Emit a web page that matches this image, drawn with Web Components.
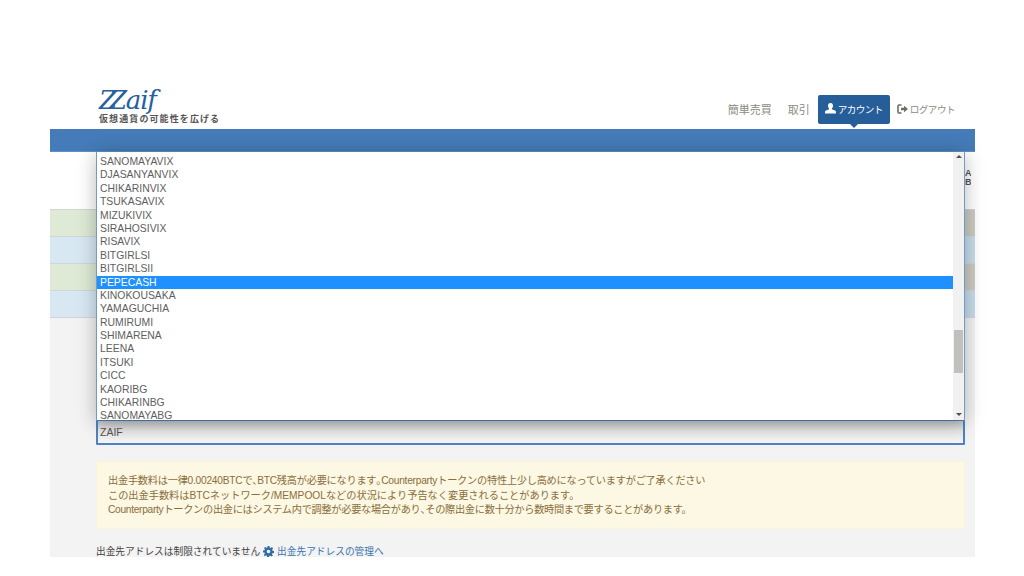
<!DOCTYPE html>
<html lang="ja">
<head>
<meta charset="utf-8">
<title>Zaif</title>
<style>
  html, body { margin: 0; background: #fff; }
  body { font-family: "Liberation Sans", "Noto Sans CJK JP", sans-serif; width: 1024px; height: 576px; overflow: hidden; }
  notice-box span { font-feature-settings: "halt"; }
</style>
</head>
<body>
<zaif-page>
  <zaif-header slot="header"></zaif-header>
  <balance-table slot="table"></balance-table>
  <coin-select slot="select"></coin-select>
  <notice-box slot="notice">
    <p style="letter-spacing:-.24px">出金手数料は一律0.00240BTCで<span>、</span>BTC残高が必要になります<span>。</span>Counterpartyトークンの特性上少し高めになっていますがご了承ください</p>
    <p>この出金手数料はBTCネットワーク/MEMPOOLなどの状況により予告なく変更されることがあります。</p>
    <p style="letter-spacing:-.29px">Counterpartyトークンの出金にはシステム内で調整が必要な場合があり<span>、</span>その際出金に数十分から数時間まで要することがあります。</p>
  </notice-box>
  <address-note slot="note"></address-note>
</zaif-page>

<script>
class ZaifPage extends HTMLElement {
  connectedCallback() {
    this.attachShadow({mode:'open'});
    this.shadowRoot.innerHTML = `
    <style>
      :host { display: block; padding: 87px 49px 0 50px; }
      .bar {
        height: 23px;
        background: #447bb8;
        border-bottom: 1px solid #5f8fc3;
        box-sizing: border-box;
      }
      main {
        position: relative;
        height: 405px;
        background: linear-gradient(#fff 0, #fff 57px, #f3f3f3 57px);
        display: flex;
        flex-direction: column;
      }
      .letters {
        position: absolute; left: 915px; top: 17px; width: 6px; overflow: hidden;
        font: bold 9px/9px "Liberation Sans", sans-serif; color: #555;
      }
      .table { margin-top: 57px; }
      .form { position: absolute; left: 46px; top: 268px; width: 869px; }
      .notice { margin-top: 16px; display: block; }
      .note { margin-top: 16px; display: block; }
    </style>
    <slot name="header"></slot>
    <div class="bar"></div>
    <main>
      <div class="letters">A<br>B</div>
      <div class="table"><slot name="table"></slot></div>
      <div class="form">
        <slot name="select"></slot>
        <div class="notice"><slot name="notice"></slot></div>
        <div class="note"><slot name="note"></slot></div>
      </div>
    </main>`;
  }
}

class ZaifHeader extends HTMLElement {
  connectedCallback() {
    this.attachShadow({mode:'open'});
    this.shadowRoot.innerHTML = `
    <style>
      :host { display: flex; justify-content: space-between; height: 42px; padding: 0 20px 0 49px; background: #fff; font-family: "Liberation Sans", "Noto Sans CJK JP", sans-serif; }
      .logo { display: flex; flex-direction: column; }
      .word { position: relative; height: 25px; padding-left: 10px; font: italic 26px/26px "DejaVu Serif", serif; color: #26609e; letter-spacing: -1.2px; }
      .word::before { content: "Z"; position: absolute; left: 0; top: 0; }
      .tag { font: 700 9px/11px "Noto Sans CJK JP", sans-serif; color: #555; letter-spacing: 1.1px; white-space: nowrap; margin-top: 1px; }
      nav { display: flex; align-items: flex-start; font-size: 9.6px; letter-spacing: -.55px; color: #8b8b80; padding-top: 8px; }
      a { display: flex; align-items: center; height: 27px; padding-bottom: 2px; white-space: nowrap; }
      .big { font-size: 11px; letter-spacing: 0; margin-right: 16px; }
      .big + .active { margin-left: -8px; }
      .active { position: relative; width: 72px; justify-content: center; box-sizing: content-box; background: #265e99; color: #fff; border-radius: 2px; margin-right: 7px; gap: 2px; }
      .active::after { content: ""; position: absolute; left: 32px; bottom: -4px; border: 4px solid transparent; border-bottom: 0; border-top-color: #265e99; }
      .out { gap: 2px; }
      svg { display: block; }
    </style>
    <div class="logo">
      <div class="word">Zaif</div>
      <div class="tag">仮想通貨の可能性を広げる</div>
    </div>
    <nav>
      <a class="big">簡単売買</a>
      <a class="big">取引</a>
      <a class="active">
        <svg width="11" height="11" viewBox="0 0 11 11"><path fill="#fff" d="M5.500 0C3.900 0 3 1.200 3 2.800c0 1.100.5 2.100 1.100 2.700v.8L.6 7.800C.2 8 0 8.400 0 8.900V10.500h11V8.900c0-.5-.2-.9-.6-1.100L6.900 6.300v-.8C7.500 4.900 8 3.900 8 2.800 8 1.200 7.100 0 5.500 0z"/></svg>
        アカウント
      </a>
      <a class="out">
        <svg width="11" height="10" viewBox="0 0 11 10"><path fill="none" stroke="#6e6e66" stroke-width="1.600" d="M4.500 1H2a1 1 0 0 0-1 1v6a1 1 0 0 0 1 1h2.500"/><path fill="#6e6e66" d="M4 3.800h3V1.800L11 5 7 8.200V6.200H4z"/></svg>
        ログアウト
      </a>
    </nav>`;
  }
}

class BalanceTable extends HTMLElement {
  connectedCallback() {
    this.attachShadow({mode:'open'});
    const rows = ['g','b','g','b'].map(c => `<div class="row ${c}"></div>`).join('');
    this.shadowRoot.innerHTML = `
    <style>
      :host { display: block; border-top: 1px solid #d4d4d0; }
      .row { height: 27px; box-sizing: border-box; border-bottom: 1px solid #cfd6da; }
      .g { background: linear-gradient(90deg, #deead6 0 890px, #cbcbc3 890px); }
      .b { background: linear-gradient(90deg, #d8e8f3 0 890px, #c7dceb 890px); }
    </style>${rows}`;
  }
}

class CoinSelect extends HTMLElement {
  connectedCallback() {
    this.attachShadow({mode:'open'});
    const coins = ['SANOMAYAVIX','DJASANYANVIX','CHIKARINVIX','TSUKASAVIX','MIZUKIVIX','SIRAHOSIVIX','RISAVIX','BITGIRLSI','BITGIRLSII','PEPECASH','KINOKOUSAKA','YAMAGUCHIA','RUMIRUMI','SHIMARENA','LEENA','ITSUKI','CICC','KAORIBG','CHIKARINBG','SANOMAYABG'];
    const items = coins.map(c => `<li class="${c === 'PEPECASH' ? 'sel' : ''}">${c}</li>`).join('');
    this.shadowRoot.innerHTML = `
    <style>
      :host { display: block; font-family: "Liberation Sans", "Noto Sans CJK JP", sans-serif; }
      .wrap { position: relative; }
      .field {
        height: 25px; box-sizing: border-box; padding-left: 2px;
        border: 2px solid #4a84c4; border-top-width: 1px; border-radius: 1px;
        background: linear-gradient(#c6c6c6, #e7e7e7 10px, #f6f6f6);
        font-size: 10.5px; line-height: 22px; color: #555;
      }
      .popup {
        position: absolute; left: 0; bottom: 100%; width: 100%; height: 268px; box-sizing: border-box;
        display: flex; background: #fff;
        border: 1px solid #6f9bcb; border-top: 0; border-bottom: 0;
        box-shadow: 0 3px 18px rgba(0,0,0,.28);
      }
      ul { flex: 1; margin: 0; padding: 3px 0 0; list-style: none; overflow: hidden; font-size: 10.4px; line-height: 13.4px; color: #5e5e5e; }
      li { padding-left: 3px; height: 13.4px; white-space: nowrap; }
      .sel { background: #1e90ff; color: #fff; }
      .scroll { position: relative; width: 11px; background: #f1f1f1; }
      .thumb { position: absolute; left: 1px; right: 1px; top: 178px; height: 43px; background: #c1c1bc; }
      .up, .down { position: absolute; left: 3px; border: 3px solid transparent; }
      .up { top: 3px; border-top: 0; border-bottom: 3px solid #505050; }
      .down { bottom: 4px; border-bottom: 0; border-top: 3px solid #505050; }
    </style>
    <div class="wrap">
      <div class="field">ZAIF</div>
      <div class="popup">
        <ul>${items}</ul>
        <div class="scroll"><i class="up"></i><i class="thumb"></i><i class="down"></i></div>
      </div>
    </div>`;
  }
}

class NoticeBox extends HTMLElement {
  connectedCallback() {
    this.attachShadow({mode:'open'});
    this.shadowRoot.innerHTML = `
    <style>
      :host { display: block; height: 68px; box-sizing: border-box; padding: 12px 11px 0; background: #fcf8e3; border: 1px solid #faf2da; color: #8a6d3b; font: 10.2px/14.6px "Liberation Sans", "Noto Sans CJK JP", sans-serif; white-space: nowrap; }
      ::slotted(p) { margin: 0; }
    </style>
    <slot></slot>`;
  }
}

class AddressNote extends HTMLElement {
  connectedCallback() {
    this.attachShadow({mode:'open'});
    this.shadowRoot.innerHTML = `
    <style>
      :host { display: flex; align-items: center; gap: 3px; font: 9.7px/14px "Liberation Sans", "Noto Sans CJK JP", sans-serif; color: #444; white-space: nowrap; }
      a { color: #3a75b0; }
      svg { display: block; margin-top: -1px; }
    </style>
    <span>出金先アドレスは制限されていません</span>
    <svg width="11" height="11" viewBox="-6 -6 12 12"><path fill="#2f6ca8" fill-rule="evenodd" d="M-1-6h2l.3 1.700 1.100.5L3.800-4.800 5-3.300 4 -1.900l.3 1.100L6 -.5v2l-1.700.3-.5 1.100 1 1.400L3.300 5.500 1.900 4.500l-1.100.3L.5 6h-2l-.3-1.500-1.100-.3-1.400 1L-5 3.700l1-1.400-.5-1.100L-6 1v-2l1.600-.3.5-1.100-1-1.400L-3.700-5l1.400 1 1.100-.5zM0-2a2 2 0 1 0 0 4 2 2 0 0 0 0-4z"/></svg>
    <a>出金先アドレスの管理へ</a>`;
  }
}

customElements.define('zaif-page', ZaifPage);
customElements.define('zaif-header', ZaifHeader);
customElements.define('balance-table', BalanceTable);
customElements.define('coin-select', CoinSelect);
customElements.define('notice-box', NoticeBox);
customElements.define('address-note', AddressNote);
</script>
</body>
</html>
